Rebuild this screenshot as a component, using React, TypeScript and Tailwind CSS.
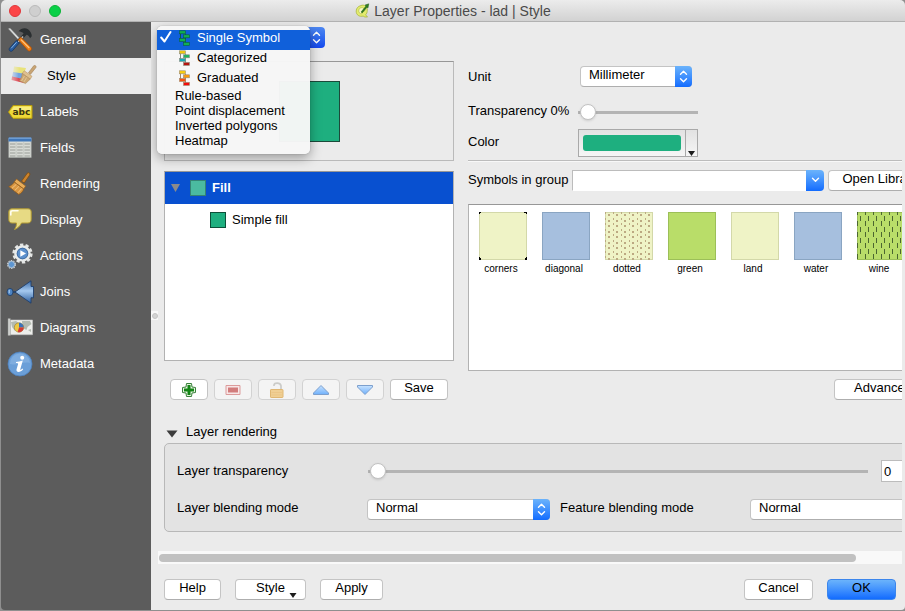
import React from "react";

type IconProps = { className?: string };

/* ---------- sidebar icons ---------- */

const GeneralIcon = () => (
  <svg className="size-6 shrink-0 overflow-visible" viewBox="0 0 24 24">
    <path d="M0.5 0.8 2 0.3 11 9.8 9.8 11Z" fill="#e4e6e6" stroke="#a9adad" strokeWidth=".5" />
    <path d="M10.5 3.2C13 .3 17 -.6 20 1.2c2.400 1.500 3.800 4.500 3.800 7l-1.800 2c-.6-1.800-1.700-2.900-3.400-3.400L10 16l-2-2 7.600-8.600c-1.200-1.400-3-2-5.100-2.200Z" fill="#2b2f31" />
    <path d="M15 8.500 9.500 14.800" stroke="#b9bdbe" strokeWidth="1.600" />
    <path d="M1.500 20.200 8.300 12.400l2.900 2.700-6.900 7.800c-1.900 1.300-4-.9-2.800-2.700Z" fill="#285a9c" stroke="#163763" strokeWidth=".8" />
    <path d="m3.200 20.300 5.400-6.100" stroke="#83b3e4" strokeWidth="1" />
    <path d="m10.300 11.700 2.600-2.400 10.300 10.200c1.200 2-1 4.300-3 3.300Z" fill="#ee7d15" stroke="#a84e06" strokeWidth=".8" />
    <path d="m13 11.700 8.300 8.300" stroke="#ffc680" strokeWidth="1.200" />
  </svg>
);

const StyleIcon = () => (
  <svg className="size-6 shrink-0 overflow-visible" viewBox="0 0 24 24">
    <defs>
      <linearGradient id="fadeY"><stop offset="0" stopColor="#e9e58a" stopOpacity=".4" /><stop offset=".5" stopColor="#e9e37a" /></linearGradient>
      <linearGradient id="fadeB"><stop offset="0" stopColor="#8fb5e8" stopOpacity=".4" /><stop offset=".6" stopColor="#74a4e0" /></linearGradient>
      <linearGradient id="fadeR"><stop offset="0" stopColor="#e5707a" stopOpacity=".6" /><stop offset=".5" stopColor="#dd4754" /></linearGradient>
    </defs>
    <path d="M2 2.500 14 4l-2 6-11-1.500Z" fill="url(#fadeY)" />
    <path d="M1 8l10 1.500-1 5.500L0 13Z" fill="url(#fadeB)" />
    <path d="m0 12.500 9 2 5 3-2 1.500L-.5 16Z" fill="url(#fadeR)" />
    <path d="m16.500 8.700 5.200-6.900c1.400-1 2.900.3 2.200 1.800l-5.400 6.700Z" fill="#c9a473" stroke="#a07e52" strokeWidth=".6" />
    <path d="M12.300 6.800 20 12.300l-1.800 2.900-8-5.800Z" fill="#dfc08f" stroke="#b28d5c" strokeWidth=".5" />
    <path d="m10.200 9.400 8 5.800-4.700 4.400-6.300-2.800c1.900-2 3-4.500 3-7.400Z" fill="#cda873" stroke="#a58253" strokeWidth=".5" />
    <path d="m12.500 12-3 5m5.200-3.600-2.900 4.800" stroke="#ead0a3" strokeWidth=".7" />
  </svg>
);

const LabelsIcon = () => (
  <svg className="size-6 shrink-0 overflow-visible" viewBox="0 0 24 24">
    <path d="M5 5.500h19v12.800H5L.5 12Z" fill="#efd937" stroke="#b79b0d" />
    <path d="M6 6.500h17v4H3.200Z" fill="#f8ec7b" />
    <text x="4.500" y="15" fontSize="9" fontWeight="700" fontFamily="DejaVu Sans, sans-serif" fill="#3a3411">abc</text>
  </svg>
);

const FieldsIcon = () => (
  <svg className="size-6 shrink-0 overflow-visible" viewBox="0 0 24 24">
    <path d="M.8 2h22.400v19.500H.8Z" fill="#d8dbd6" stroke="#a4a8a3" strokeWidth=".7" />
    <path d="M.5 1.500h23v4H.5Z" fill="#3f77ba" />
    <path d="M1 2.200h22" stroke="#81acdd" />
    <path d="M2 8h20M2 11h20M2 14h20M2 17h20M2 20h20" stroke="#989c96" strokeDasharray="5.500 1.700" />
    <path d="M8.200 6v15M15.700 6v15" stroke="#c2c5bf" strokeWidth=".8" />
  </svg>
);

const RenderingIcon = () => (
  <svg className="size-6 shrink-0 overflow-visible" viewBox="0 0 24 24">
    <path d="m13.500 9.200 5.800-8c1.500-1.300 3.200.2 2.400 1.800l-5.500 8Z" fill="#cc832c" stroke="#7f4c0e" strokeWidth=".8" />
    <path d="m8.500 7 9.200 7-2 3-9.500-7Z" fill="#e9ad59" stroke="#935d1c" strokeWidth=".7" />
    <path d="m6.200 10 9.500 7c-.7 2.300-2.500 4.400-5 5.500L.7 14.500c2.600-.8 4.300-2.500 5.500-4.500Z" fill="#da9742" stroke="#8c5718" strokeWidth=".7" />
    <path d="m8.300 12.300-4.300 4m7-2-4.300 4.200m7-2-3.700 4.200" stroke="#f7cf8e" strokeWidth=".8" />
  </svg>
);

const DisplayIcon = () => (
  <svg className="size-6 shrink-0 overflow-visible" viewBox="0 0 24 24">
    <path d="M4 .8h16c2.200 0 3.200 1.300 3.200 3.200v7.500c0 2.300-1.200 3.500-3.200 3.500h-6.500c-1.500 3.200-3.800 5.200-7 6.500 1.500-2 2-4 2-6.500H4C2 15 .8 13.800.8 11.500V4C.8 2.100 2 .8 4 .8Z" fill="#e7da84" stroke="#b39b32" />
    <path d="M2.800 7V4.500C2.800 3.300 3.500 2.700 4.600 2.700H10" fill="none" stroke="#fffef0" strokeWidth="1.600" strokeLinecap="round" />
  </svg>
);

const ActionsIcon = () => (
  <svg className="size-6 shrink-0 overflow-visible" viewBox="0 0 24 24">
    <circle cx="14.500" cy="9.500" r="8.800" fill="none" stroke="#e3e5e4" strokeWidth="2.600" strokeDasharray="3.300 2.230" />
    <circle cx="14.500" cy="9.500" r="7" fill="#3e76b9" stroke="#e9ebea" strokeWidth="2.600" />
    <circle cx="14.500" cy="9.500" r="5.300" fill="#5b90cd" stroke="#426b9c" strokeWidth=".8" />
    <path d="m12.300 6.200 5.700 3.300-5.700 3.300Z" fill="#fff" />
    <circle cx="3.500" cy="20.500" r="3.900" fill="none" stroke="#cdd2d5" strokeWidth="1.200" strokeDasharray="1.500 .95" />
    <circle cx="3.500" cy="20.500" r="3.200" fill="#5e96d1" stroke="#b7c9da" strokeWidth=".9" />
  </svg>
);

const JoinsIcon = () => (
  <svg className="size-6 shrink-0 overflow-visible" viewBox="0 0 24 24">
    <defs>
      <linearGradient id="joinBlue" x1="0" x2="0" y1="0" y2="1"><stop offset="0" stopColor="#3c6ca9" /><stop offset=".45" stopColor="#a5c9ef" /><stop offset="1" stopColor="#2c5d9c" /></linearGradient>
    </defs>
    <path d="M7 12 23 .8v5.700h2.500v11.300H23v5.400Z" fill="url(#joinBlue)" stroke="#203f6c" strokeWidth=".9" />
    <path d="M4 12h4" stroke="#203f6c" strokeWidth="1.500" />
    <ellipse cx="2" cy="12" rx="3" ry="3.600" fill="#4d84c3" stroke="#213f68" strokeWidth=".9" />
    <path d="M1.200 9.800v3.500" stroke="#b8d4f2" />
  </svg>
);

const DiagramsIcon = () => (
  <svg className="size-6 shrink-0 overflow-visible" viewBox="0 0 24 24">
    <path d="M2 4h22.500v14.700H2Z" fill="#edeeeb" stroke="#c4c5c2" strokeWidth=".6" />
    <path d="M0 2.500h2.300v17H0Z" fill="#d4d5d3" stroke="#8b8c8a" strokeWidth=".5" />
    <path d="m3 6 5-1 3 2-3 3-1 5-3-4ZM14 5l8 0 1.500 3-4 3-1 3-4-2ZM20 14l3-1v3Z" fill="#b3bab0" />
    <circle cx="11" cy="11.500" r="4.700" fill="#edc843" stroke="#866f29" strokeWidth=".5" />
    <path d="M11 11.500V6.800a4.700 4.700 0 0 1 4.700 4.700Z" fill="#3d73bb" />
    <path d="M11 11.500h4.700a4.700 4.700 0 0 1-6 4.500Z" fill="#d23a37" />
  </svg>
);

const MetadataIcon = () => (
  <svg className="size-6 shrink-0 overflow-visible" viewBox="0 0 24 24">
    <circle cx="12" cy="12" r="12" fill="#6b9fd8" stroke="#4d80bd" strokeWidth=".8" />
    <path d="M2 12a10 10 0 0 1 20-1C16 9 8 14 2 12Z" fill="#88b3e3" opacity=".7" />
    <circle cx="14.200" cy="5.800" r="2" fill="#fff" />
    <path d="M8 9.900c2.200-.2 4.300-.7 6.800-1.400L12.300 17.300c-.2 1 .5.900 2.200-.7l.7.700c-2.500 3.300-7.300 3.700-6.700.3l1.600-5.700c.2-.8-.5-.9-2.100-.9Z" fill="#fff" />
  </svg>
);

/* ---------- small drawings ---------- */

const LogoIcon = () => (
  <svg className="size-[15px] shrink-0" viewBox="0 0 15 15">
    <path d="M6 2.500c3-1.200 6.500.5 6.300 4.700 0 2-.6 3.600-1.700 4.600L12.500 14H9.300L8.500 13C4.500 14.200 1 12 1.200 8 1.300 5.200 3 3.300 6 2.500Z" fill="#e3ec6e" stroke="#a3b038" strokeWidth=".7" />
    <path d="M6 4.700c2-.5 4 .8 3.800 3.300L7.700 8.500 6.500 11C4.500 10.600 3.500 9 3.800 7.300c.2-1.300 1-2.200 2.200-2.600Z" fill="#f6f9c9" stroke="#a7b43c" strokeWidth=".6" />
    <path d="M13.800.8 10 2l1 1-5 6 1.200 1L12 4.200l1 .8Z" fill="#2d7d20" stroke="#185010" strokeWidth=".4" />
  </svg>
);

const RendererIcon = ({ colors, edge }: { colors: string[]; edge: string }) => (
  <svg className="h-4 w-3 shrink-0" viewBox="0 0 12 16">
    <path d="M1.500 3v7.500M6.500 4v10" stroke={edge} />
    <rect x=".5" y=".8" width="6" height="3" fill={colors[0]} stroke={edge} strokeWidth=".6" />
    <rect x="4.500" y="4.800" width="6" height="3" fill={colors[1]} stroke={edge} strokeWidth=".6" />
    <rect x=".5" y="8.500" width="6" height="3" fill={colors[2]} stroke={edge} strokeWidth=".6" />
    <rect x="4.500" y="12.400" width="6" height="3" fill={colors[3]} stroke={edge} strokeWidth=".6" />
  </svg>
);

const UpDown = ({ className = "" }: IconProps) => (
  <svg className={className} width="9" height="13" viewBox="0 0 9 13" fill="none" stroke="#fff" strokeWidth="1.400" strokeLinecap="round" strokeLinejoin="round">
    <path d="m1.500 4.300 3-3 3 3M1.500 8.700l3 3 3-3" />
  </svg>
);

const AddIcon = () => (
  <svg className="size-4" viewBox="0 0 16 16">
    <path d="M5.500 1.500h5L11 5l3.500.5v5L11 11l-.5 3.500h-5L5 11l-3.500-.5v-5L5 5Z" fill="#e5f3df" stroke="#39813b" strokeLinejoin="round" />
    <path d="M6.500 3h3v3.500H13v3H9.500V13h-3V9.500H3v-3h3.500Z" fill="#128414" />
  </svg>
);
const RemoveIcon = () => (
  <svg className="size-4" viewBox="0 0 16 16">
    <path d="M1 3.500h14v9H1Z" fill="#f8e7e7" stroke="#dc9b9b" />
    <path d="M3 5.500h10v5H3Z" fill="#d27c7c" />
  </svg>
);
const LockIcon = () => (
  <svg className="size-4" viewBox="0 0 16 16">
    <path d="M5 4V3c.5-2.300 6-2.800 7 .8V8" fill="none" stroke="#cbcbc8" strokeWidth="1.700" />
    <rect x="1.500" y="7.500" width="12.500" height="8" rx=".6" fill="#f0cf94" stroke="#e0b773" />
    <path d="M2.500 10.500h10.500M2.500 13h10.500" stroke="#e9c183" strokeWidth=".7" />
  </svg>
);
const TriangleIcon = ({ d }: { d: string }) => (
  <svg className="size-4" viewBox="0 0 16 16">
    <defs>
      <linearGradient id="triBlue" x1="0" x2="0" y1="0" y2="1"><stop offset="0" stopColor="#c8e3ff" /><stop offset="1" stopColor="#6fb0fb" /></linearGradient>
    </defs>
    <path d={d} fill="url(#triBlue)" stroke="#7c9fcd" strokeLinejoin="round" />
  </svg>
);

const swatchColors: Record<string, [string, string]> = {
  corners: ["#eff3c6", "#d3d8a9"],
  diagonal: ["#a6bfde", "#8aa5c2"],
  dotted: ["#eff3c6", "#d3d8a9"],
  green: ["#b9dd69", "#9cbf58"],
  land: ["#eff3c6", "#d3d8a9"],
  water: ["#a6bfde", "#8aa5c2"],
  wine: ["#b9dd69", "#9cbf58"],
};

const rows = [0, 1, 2, 3, 4, 5, 6, 7, 8];
const columns = [0, 1, 2, 3, 4, 5];

const Swatch = ({ kind }: { kind: string }) => (
  <svg className="size-12" viewBox="0 0 48 48" shapeRendering="crispEdges">
    <rect x=".5" y=".5" width="47" height="47" fill={swatchColors[kind][0]} stroke={swatchColors[kind][1]} />
    {kind === "dotted" &&
      rows.map((r) =>
        columns.map((c) => (
          <g key={`${r}-${c}`} fill="#bca982">
            <rect x={c * 8 + 3} y={Math.round(r * 5.5) + 2} width="2" height="2" />
            <rect x={c * 8} y={Math.round(r * 5.5)} width="1" height="2" />
          </g>
        )),
      )}
    {kind === "wine" &&
      rows.map((r) =>
        columns.map((c) => (
          <rect key={`${r}-${c}`} x={c * 8 + (r % 2 ? 3 : 0)} y={Math.round(r * 5.5) - 2} width="1" height="5" fill="#4b6630" />
        )),
      )}
    {kind === "corners" && <path d="M0 0h2v1H1v1H0ZM48 0v2h-1V1h-2V0ZM0 48v-3h1v1h1v2ZM48 48h-2v-2h1v-1h1Z" fill="#000" />}
  </svg>
);

/* ---------- controls ---------- */

const buttonBase = "flex h-[21px] items-center justify-center rounded-[4px] border border-[#c4c4c4] border-b-[#aeaeae] bg-white pb-[3px]";

function PushButton({ className = "", children }: { className?: string; children: React.ReactNode }) {
  return <button type="button" className={`${buttonBase} shrink-0 whitespace-nowrap ${className}`}>{children}</button>;
}

function ToolButton({ label, disabled = true, children }: { label: string; disabled?: boolean; children: React.ReactNode }) {
  return (
    <button
      type="button"
      aria-label={label}
      disabled={disabled}
      className="flex h-[21px] w-[38px] items-center justify-center rounded-[4px] border border-[#c4c4c4] bg-white disabled:border-[#d2d2d2] disabled:bg-[#f4f4f4]"
    >
      {children}
    </button>
  );
}

function Select({ id, value, className = "" }: { id: string; value: string; className?: string }) {
  return (
    <div className={`relative h-[21px] ${className}`}>
      <select id={id} className="h-full w-full appearance-none rounded-[4px] border border-[#c4c4c4] border-b-[#aeaeae] bg-white pb-[3px] pl-2 outline-none">
        <option>{value}</option>
      </select>
      <span className="pointer-events-none absolute inset-y-0 right-0 flex w-[17px] items-center justify-center rounded-r-[4px] bg-linear-to-b from-[#6bb3fb] to-[#116bfe]">
        <UpDown />
      </span>
    </div>
  );
}

function Slider({ id, className = "" }: { id: string; className?: string }) {
  return (
    <input
      id={id}
      type="range"
      min={0}
      max={100}
      defaultValue={0}
      className={`h-5 min-w-0 appearance-none bg-[linear-gradient(#b4b4b4,#b4b4b4)] bg-[length:100%_3px] bg-center bg-no-repeat px-0.5 [&::-webkit-slider-thumb]:size-4 [&::-webkit-slider-thumb]:appearance-none [&::-webkit-slider-thumb]:rounded-full [&::-webkit-slider-thumb]:border [&::-webkit-slider-thumb]:border-[#c2c2c2] [&::-webkit-slider-thumb]:bg-white [&::-webkit-slider-thumb]:shadow-sm ${className}`}
    />
  );
}

/* ---------- data ---------- */

const sections = [
  { label: "General", Icon: GeneralIcon },
  { label: "Style", Icon: StyleIcon },
  { label: "Labels", Icon: LabelsIcon },
  { label: "Fields", Icon: FieldsIcon },
  { label: "Rendering", Icon: RenderingIcon },
  { label: "Display", Icon: DisplayIcon },
  { label: "Actions", Icon: ActionsIcon },
  { label: "Joins", Icon: JoinsIcon },
  { label: "Diagrams", Icon: DiagramsIcon },
  { label: "Metadata", Icon: MetadataIcon },
];

const renderers = [
  { label: "Single Symbol", height: "h-5", colors: ["#11b04f", "#11b04f", "#11b04f", "#11b04f"], edge: "#0b5b45" },
  { label: "Categorized", height: "h-5", colors: ["#f4c90c", "#1cb561", "#17aab5", "#b5130f"], edge: "#8d8d80" },
  { label: "Graduated", height: "h-[18px]", colors: ["#f8cf0d", "#fb9a0b", "#f9530d", "#f30b0b"], edge: "#a08a6c" },
];

const symbols = ["corners", "diagonal", "dotted", "green", "land", "water", "wine"];

/* ---------- window parts ---------- */

function TitleBar() {
  return (
    <header className="flex h-[22px] items-center rounded-t-[5px] border-b border-[#b1b1b1] bg-linear-to-b from-[#ececec] to-[#d2d2d2]">
      <div className="flex w-20 gap-2 pl-2">
        <button type="button" aria-label="Close" className="size-3 rounded-full border border-[#e0383b] bg-[#fc4648]" />
        <button type="button" aria-label="Minimize" className="size-3 rounded-full border border-[#bababa] bg-[#cfcfcf]" />
        <button type="button" aria-label="Zoom" className="size-3 rounded-full border border-[#0cb437] bg-[#0ad048]" />
      </div>
      <div className="flex flex-1 items-center justify-center gap-1 pr-20">
        <LogoIcon />
        <h1 className="text-[14px] leading-4 text-[#4a4a4a]">Layer Properties - lad | Style</h1>
      </div>
    </header>
  );
}

function Sidebar() {
  return (
    <nav className="w-[150px] shrink-0 rounded-bl-[4px] bg-[#5c5c5c]">
      {sections.map(({ label, Icon }) => {
        const active = label === "Style";
        return (
          <a
            key={label}
            href="#"
            className={`flex h-9 items-center ${active ? "gap-[11px] bg-[#ebebeb] pl-[11px] text-black" : "gap-2 pl-[7px] text-white"}`}
          >
            <Icon />
            {label}
          </a>
        );
      })}
    </nav>
  );
}

function RendererPicker() {
  return (
    <div className="relative z-10 w-[168px]">
      <button
        type="button"
        aria-label="Renderer"
        aria-haspopup="listbox"
        className="flex h-[21px] w-full justify-end overflow-hidden rounded-[4px] bg-white"
      >
        <span className="flex h-full w-[17px] items-center justify-center bg-linear-to-b from-[#4e87f0] to-[#1748ee]">
          <UpDown />
        </span>
      </button>
      <ul
        role="listbox"
        aria-label="Renderer"
        className="absolute -top-px left-0 w-[153px] rounded-[5px] bg-[#f6f6f6]/98 pt-1 pb-1.5 leading-[15px] shadow-[0_4px_12px_rgba(0,0,0,0.35),0_0_1px_rgba(0,0,0,0.4)]"
      >
        {renderers.map((r, i) => (
          <li
            key={r.label}
            role="option"
            aria-selected={i === 0}
            className={`flex items-start gap-1.5 ${r.height} ${i === 0 ? "bg-[#1060da] text-white" : ""}`}
          >
            <span className="w-4 pl-[3px]">
              {i === 0 && (
                <svg width="12" height="14" viewBox="0 0 12 14" fill="none" stroke="#fff" strokeWidth="2" strokeLinecap="round" strokeLinejoin="round">
                  <path d="m1.200 7.500 3.300 4L10.500 2" />
                </svg>
              )}
            </span>
            <RendererIcon colors={r.colors} edge={r.edge} />
            {r.label}
          </li>
        ))}
        {["Rule-based", "Point displacement", "Inverted polygons", "Heatmap"].map((label) => (
          <li key={label} role="option" aria-selected={false} className="pl-[18px]">{label}</li>
        ))}
      </ul>
    </div>
  );
}

function SymbolTree() {
  return (
    <div className="w-[290px] shrink-0">
      <div className="flex h-[100px] items-center justify-center border border-[#bababa] border-t-[#979797] pl-[1px]">
        <div className="h-[61px] w-[61px] border border-[#1b4a3a] bg-[#1eaf7f]" />
      </div>
      <ul role="tree" aria-label="Symbol layers" className="mt-2.5 h-[190px] border border-[#b2b2b2] border-t-[#979797] bg-white">
        <li role="treeitem" aria-expanded="true" aria-selected="true">
          <div className="flex h-8 items-center bg-[#0850d0] pl-1.5 font-bold text-white">
            <svg width="9" height="8" viewBox="0 0 9 8"><path d="M0 0h9L4.500 8Z" fill="#8b8b8b" /></svg>
            <span className="mr-1.5 ml-2.5 size-4 border border-[#358474] bg-[#4bbba0]" />
            Fill
          </div>
          <ul role="group">
            <li role="treeitem" aria-selected="false" className="flex h-8 items-center gap-1.5 pl-[45px]">
              <span className="size-4 border border-[#0c5039] bg-[#1eaf7f]" />
              Simple fill
            </li>
          </ul>
        </li>
      </ul>
      <div className="mt-[18px] flex gap-1.5 pl-1.5">
        <ToolButton label="Add symbol layer" disabled={false}><AddIcon /></ToolButton>
        <ToolButton label="Remove symbol layer"><RemoveIcon /></ToolButton>
        <ToolButton label="Lock layer color"><LockIcon /></ToolButton>
        <ToolButton label="Move up"><TriangleIcon d="M8 3.500 15.500 11v1.500H.5V11Z" /></ToolButton>
        <ToolButton label="Move down"><TriangleIcon d="M.5 3.500h15V5L8 12.500.5 5Z" /></ToolButton>
        <PushButton className="w-[58px]">Save</PushButton>
      </div>
    </div>
  );
}

function SymbolOptions() {
  return (
    <div className="min-w-0 flex-1 pt-[5px]">
      <div className="flex h-[21px] items-center">
        <label htmlFor="unit" className="w-28">Unit</label>
        <Select id="unit" value="Millimeter" className="w-28" />
      </div>
      <div className="mt-[15px] flex h-5 items-center">
        <label htmlFor="transparency" className="w-[110px] pb-0.5 whitespace-nowrap">Transparency 0%</label>
        <Slider id="transparency" className="w-[120px]" />
      </div>
      <div className="mt-[7px] flex h-7 items-center">
        <label htmlFor="color" className="w-[110px] pb-0.5">Color</label>
        <button id="color" type="button" className="flex h-full w-[120px] border border-[#a9a9a9] bg-linear-to-b from-[#e2e2e2] to-[#f6f6f6]">
          <span className="flex h-full flex-1 items-center px-1">
            <span className="h-4 w-full rounded-[3px] bg-[#1eaf7f]" />
          </span>
          <span className="flex h-full w-3 items-end justify-center border-l border-[#a9a9a9]">
            <svg width="7" height="5" viewBox="0 0 7 5"><path d="M0 0h7L3.500 5Z" fill="#1c1c1c" /></svg>
          </span>
        </button>
      </div>
      <div className="mt-[3px] -mr-8 h-0.5 border-t border-[#bcbcbc] bg-[#f8f8f8]" />
      <div className="mt-[7px] flex h-[22px] items-center">
        <label htmlFor="group" className="w-[104px] whitespace-nowrap">Symbols in group</label>
        <div className="mr-1 flex h-[21px] flex-1">
          <input id="group" type="text" className="h-full min-w-0 flex-1 border border-r-0 border-[#bcbcbc] border-b-white bg-white px-1 outline-none" />
          <button type="button" aria-label="Show groups" className="flex w-[18px] items-center justify-center rounded-r-[4px] bg-linear-to-b from-[#6bb3fb] to-[#116bfe]">
            <svg width="9" height="6" viewBox="0 0 9 6" fill="none" stroke="#fff" strokeWidth="1.400" strokeLinecap="round" strokeLinejoin="round"><path d="m1.500 1.200 3 3 3-3" /></svg>
          </button>
        </div>
        <PushButton className="w-[104px]">Open Library</PushButton>
      </div>
      <ul aria-label="Symbols" className="mt-[13px] flex h-[167px] gap-[15px] border border-[#b2b2b2] border-t-[#979797] bg-white pt-[7px] pl-2.5">
        {symbols.map((name) => (
          <li key={name} className="w-12 shrink-0">
            <Swatch kind={name} />
            <span className="block pt-[3px] pr-1 text-center text-[10px] leading-3">{name}</span>
          </li>
        ))}
      </ul>
      <div className="mt-2 flex justify-end">
        <PushButton className="w-[98px]">Advanced</PushButton>
      </div>
    </div>
  );
}

function LayerRendering() {
  return (
    <section className="mt-6">
      <button type="button" aria-expanded="true" className="flex h-4 items-center gap-2 pl-0.5">
        <svg className="mt-1" width="12" height="8" viewBox="0 0 12 8"><path d="M.5.500h11L6 7.500Z" fill="#3c3c3c" /></svg>
        Layer rendering
      </button>
      <div className="mt-[3px] rounded-[5px] border border-[#b8b8b8] bg-[#e3e3e3] px-3 pt-4 pb-[11px]">
        <div className="flex h-[22px] items-center">
          <label htmlFor="layer-transparency" className="w-[191px] shrink-0">Layer transparency</label>
          <Slider id="layer-transparency" className="flex-1" />
          <input aria-label="Layer transparency value" type="text" defaultValue="0" className="ml-[13px] h-full w-[38px] border border-[#bcbcbc] bg-white px-0.5 outline-none" />
        </div>
        <div className="mt-[17px] flex h-[21px] items-center">
          <label htmlFor="layer-blend" className="w-[190px] shrink-0 pb-[3px]">Layer blending mode</label>
          <Select id="layer-blend" value="Normal" className="w-[183px] shrink-0" />
          <label htmlFor="feature-blend" className="ml-2.5 w-[190px] shrink-0 pb-[3px]">Feature blending mode</label>
          <Select id="feature-blend" value="Normal" className="flex-1" />
        </div>
      </div>
    </section>
  );
}

export default function App() {
  return (
    <div className="flex min-h-screen flex-col border-b border-l border-[#8f8f8f] bg-[#8f8f8f] font-['Liberation_Sans',Arial,sans-serif] text-[13px] leading-4 text-black">
      <TitleBar />
      <div className="flex flex-1">
        <Sidebar />
        <main className="relative flex min-w-0 flex-1 flex-col rounded-br-[4px] bg-[#ebebeb] pr-[3px]">
          <div className="absolute top-[289px] left-0 flex h-[9px] w-[7px] items-center justify-center bg-[#f8f8f8]">
            <span className="size-1.5 rounded-full border border-[#c4c4c4] bg-[#d3d3d3]" />
          </div>
          <div className="overflow-hidden">
            <div className="min-w-[795px] pt-[5px] pr-3.5 pb-[19px] pl-1.5">
              <RendererPicker />
              <div className="pt-[13px] pl-[7px]">
                <div className="flex gap-3.5">
                  <SymbolTree />
                  <SymbolOptions />
                </div>
                <LayerRendering />
              </div>
            </div>
          </div>
          <div className="ml-[7px] h-[13px] bg-[#f9f9f9] px-px pt-[3px]">
            <div className="h-2 w-[94%] rounded-full bg-[#c1c1c1]" />
          </div>
          <footer className="mt-[15px] flex pr-1.5 pb-2.5 pl-[13px]">
            <PushButton className="w-[57px]">Help</PushButton>
            <PushButton className="ml-3.5 w-[71px]">
              <span className="pl-3">Style</span>
              <svg className="mt-3.5 ml-1" width="8" height="5" viewBox="0 0 8 5"><path d="M.5 0h7L4 5Z" fill="#1c1c1c" /></svg>
            </PushButton>
            <PushButton className="ml-3.5 w-[63px]">Apply</PushButton>
            <PushButton className="ml-auto w-[69px]">Cancel</PushButton>
            <button type="button" className="ml-3.5 flex h-[21px] w-[69px] items-center justify-center rounded-[4px] border border-[#3c86ec] bg-linear-to-b from-[#6bb3fb] to-[#116bfe] pb-[3px]">OK</button>
          </footer>
        </main>
      </div>
    </div>
  );
}
